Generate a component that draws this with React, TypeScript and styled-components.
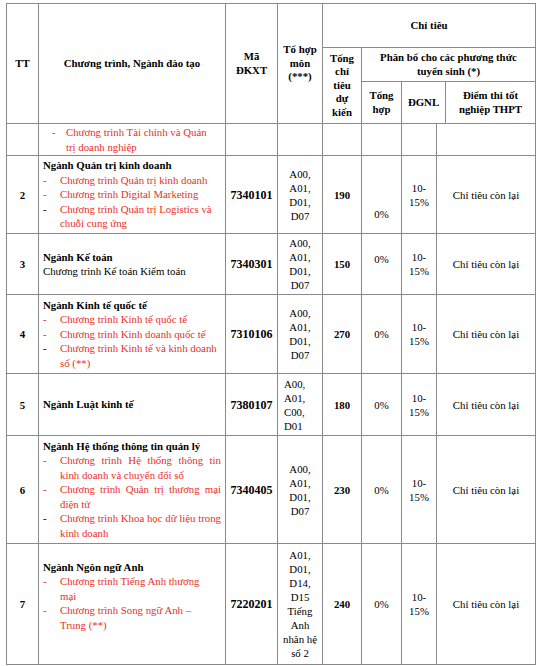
import React from 'react';
import styled, { createGlobalStyle } from 'styled-components';

type Item = { text: string; dark?: boolean };

interface Programme {
  title?: string;
  note?: string;
  items?: Item[];
  justify?: boolean;
  wide?: boolean;
  tail?: number;
  endInset?: number;
}

interface Entry {
  tt: string;
  programme: Programme;
  code: string;
  combo: string;
  comboLeft?: boolean;
  total: string;
  mixed: string;
  mixedDrop?: number;
  dgnl: string[];
  rest: string;
  min: number;
}

const LINE = '#8a8a8a';
const RED = '#ea2f27';
const INK = '#000';

const rows: Entry[] = [
  {
    tt: '',
    programme: {
      wide: true,
      endInset: 5,
      items: [{ text: 'Chương trình Tài chính và Quản trị doanh nghiệp' }],
    },
    code: '',
    combo: '',
    total: '',
    mixed: '',
    dgnl: [],
    rest: '',
    min: 31,
  },
  {
    tt: '2',
    programme: {
      title: 'Ngành Quản trị kinh doanh',
      items: [
        { text: 'Chương trình Quản trị kinh doanh' },
        { text: 'Chương trình Digital Marketing' },
        { text: 'Chương trình Quản trị Logistics và chuỗi cung ứng', dark: true },
      ],
    },
    code: '7340101',
    combo: 'A00, A01, D01, D07',
    total: '190',
    mixed: '0%',
    mixedDrop: 19,
    dgnl: ['10-', '15%'],
    rest: 'Chỉ tiêu còn lại',
    min: 77,
  },
  {
    tt: '3',
    programme: {
      title: 'Ngành Kế toán',
      note: 'Chương trình Kế toán Kiểm toán',
    },
    code: '7340301',
    combo: 'A00, A01, D01, D07',
    total: '150',
    mixed: '0%',
    mixedDrop: -5,
    dgnl: ['10-', '15%'],
    rest: 'Chỉ tiêu còn lại',
    min: 60,
  },
  {
    tt: '4',
    programme: {
      title: 'Ngành Kinh tế quốc tế',
      items: [
        { text: 'Chương trình Kinh tế quốc tế' },
        { text: 'Chương trình Kinh doanh quốc tế' },
        { text: 'Chương trình Kinh tế và kinh doanh số (**)', dark: true },
      ],
    },
    code: '7310106',
    combo: 'A00, A01, D01, D07',
    total: '270',
    mixed: '0%',
    dgnl: ['10-', '15%'],
    rest: 'Chỉ tiêu còn lại',
    min: 78,
  },
  {
    tt: '5',
    programme: { title: 'Ngành Luật kinh tế' },
    code: '7380107',
    combo: 'A00, A01, C00, D01',
    comboLeft: true,
    total: '180',
    mixed: '0%',
    dgnl: ['10-', '15%'],
    rest: 'Chỉ tiêu còn lại',
    min: 61,
  },
  {
    tt: '6',
    programme: {
      title: 'Ngành Hệ thống thông tin quản lý',
      justify: true,
      items: [
        { text: 'Chương trình Hệ thống thông tin kinh doanh và chuyển đổi số' },
        { text: 'Chương trình Quản trị thương mại điện tử' },
        { text: 'Chương trình Khoa học dữ liệu trong kinh doanh', dark: true },
      ],
    },
    code: '7340405',
    combo: 'A00, A01, D01, D07',
    total: '230',
    mixed: '0%',
    dgnl: ['10-', '15%'],
    rest: 'Chỉ tiêu còn lại',
    min: 107,
  },
  {
    tt: '7',
    programme: {
      title: 'Ngành Ngôn ngữ Anh',
      tail: 16,
      endInset: 10,
      items: [
        { text: 'Chương trình Tiếng Anh thương mại' },
        { text: 'Chương trình Song ngữ Anh – Trung (**)' },
      ],
    },
    code: '7220201',
    combo: 'A01, D01, D14, D15 Tiếng Anh nhân hệ số 2',
    total: '240',
    mixed: '0%',
    dgnl: ['10-', '15%'],
    rest: 'Chỉ tiêu còn lại',
    min: 120,
  },
];

const GlobalStyle = createGlobalStyle`
  body {
    margin: 0;
    background: #fff;
  }
`;

const Page = styled.div`
  padding: 3px 0 0 6px;
  font-family: 'Liberation Serif', 'Times New Roman', serif;
  font-size: 10.8px;
  color: ${INK};
`;

const Sheet = styled.div`
  display: inline-flex;
  flex-direction: column;
  gap: 1px;
  background: ${LINE};
  border: 1px solid ${LINE};
`;

const Head = styled.div`
  display: grid;
  grid-template-columns: 31px 186px 51px 44px 38px 39px 43px 89px;
  grid-template-rows: 43px 33px 41px;
  gap: 1px;
`;

const HeadCell = styled.div<{ $col: string; $row: string; $pad?: number }>`
  grid-column: ${(p) => p.$col};
  grid-row: ${(p) => p.$row};
  background: #fff;
  display: flex;
  align-items: center;
  justify-content: center;
  padding: 0 ${(p) => p.$pad ?? 3}px;
  text-align: center;
  font-weight: 700;
  line-height: 13.5px;
`;

const Row = styled.div<{ $min: number }>`
  display: grid;
  grid-template-columns: 31px 186px 51px 44px 38px 39px 34px 98px;
  gap: 1px;
  min-height: ${(p) => p.$min}px;
`;

const Cell = styled.div<{ $left?: boolean; $bold?: boolean; $drop?: number; $size?: number }>`
  background: #fff;
  display: flex;
  flex-direction: column;
  justify-content: center;
  padding: ${({ $drop = 0 }) =>
    `${2 + Math.max($drop, 0) * 2}px 3px ${2 + Math.max(-$drop, 0) * 2}px 3px`};
  text-align: ${(p) => (p.$left ? 'left' : 'center')};
  font-weight: ${(p) => (p.$bold ? 700 : 400)};
  font-size: ${(p) => (p.$size ? `${p.$size}px` : 'inherit')};
  line-height: 14px;
`;

const ComboCell = styled(Cell)`
  padding-left: ${(p) => (p.$left ? '6px' : '3px')};
`;

const ProgrammeCell = styled.div<{ $tail?: number; $tight?: boolean }>`
  background: #fff;
  display: flex;
  flex-direction: column;
  justify-content: center;
  padding: ${(p) => (p.$tight ? 1 : 2)}px 4px ${(p) => (p.$tight ? 1 : 2) + (p.$tail ?? 0)}px 4px;
  line-height: 14.5px;
`;

const Title = styled.div`
  font-weight: 700;
`;

const List = styled.ul<{ $inset: number; $end: number }>`
  list-style: none;
  margin: 0 ${(p) => p.$end}px 0 ${(p) => p.$inset}px;
  padding: 0;
`;

const ListItem = styled.li`
  display: flex;
`;

const Dash = styled.span<{ $dark?: boolean; $w: number }>`
  flex: 0 0 ${(p) => p.$w}px;
  color: ${(p) => (p.$dark ? INK : RED)};
`;

const ItemText = styled.span<{ $justify?: boolean }>`
  flex: 1;
  color: ${RED};
  text-align: ${(p) => (p.$justify ? 'justify' : 'left')};
`;

const ProgrammeBlock = ({ programme }: { programme: Programme }) => {
  const { title, note, items, justify, wide, tail, endInset } = programme;
  return (
    <ProgrammeCell $tail={tail} $tight={wide}>
      {title && <Title>{title}</Title>}
      {note && <div>{note}</div>}
      {items && (
        <List $inset={wide ? 9 : 0} $end={endInset ?? 0}>
          {items.map((item) => (
            <ListItem key={item.text}>
              <Dash $dark={item.dark} $w={wide ? 14 : 17}>
                -
              </Dash>
              <ItemText $justify={justify}>{item.text}</ItemText>
            </ListItem>
          ))}
        </List>
      )}
    </ProgrammeCell>
  );
};

const App = () => {
  return (
    <>
      <GlobalStyle />
      <Page>
        <Sheet>
          <Head>
            <HeadCell $col="1" $row="1 / 4">TT</HeadCell>
            <HeadCell $col="2" $row="1 / 4">Chương trình, Ngành đào tạo</HeadCell>
            <HeadCell $col="3" $row="1 / 4">Mã ĐKXT</HeadCell>
            <HeadCell $col="4" $row="1 / 4">Tổ hợp môn (***)</HeadCell>
            <HeadCell $col="5 / 9" $row="1">Chỉ tiêu</HeadCell>
            <HeadCell $col="5" $row="2 / 4">Tổng chỉ tiêu dự kiến</HeadCell>
            <HeadCell $col="6 / 9" $row="2" $pad={14}>
              Phân bổ cho các phương thức tuyển sinh (*)
            </HeadCell>
            <HeadCell $col="6" $row="3">Tổng hợp</HeadCell>
            <HeadCell $col="7" $row="3">ĐGNL</HeadCell>
            <HeadCell $col="8" $row="3">Điểm thi tốt nghiệp THPT</HeadCell>
          </Head>
          {rows.map((row, i) => (
            <Row key={i} $min={row.min}>
              <Cell $bold>{row.tt}</Cell>
              <ProgrammeBlock programme={row.programme} />
              <Cell $bold $size={12}>
                {row.code}
              </Cell>
              <ComboCell $left={row.comboLeft}>{row.combo}</ComboCell>
              <Cell $bold>{row.total}</Cell>
              <Cell $drop={row.mixedDrop}>{row.mixed}</Cell>
              <Cell>
                {row.dgnl.map((part) => (
                  <div key={part}>{part}</div>
                ))}
              </Cell>
              <Cell>{row.rest}</Cell>
            </Row>
          ))}
        </Sheet>
      </Page>
    </>
  );
};

export default App;
